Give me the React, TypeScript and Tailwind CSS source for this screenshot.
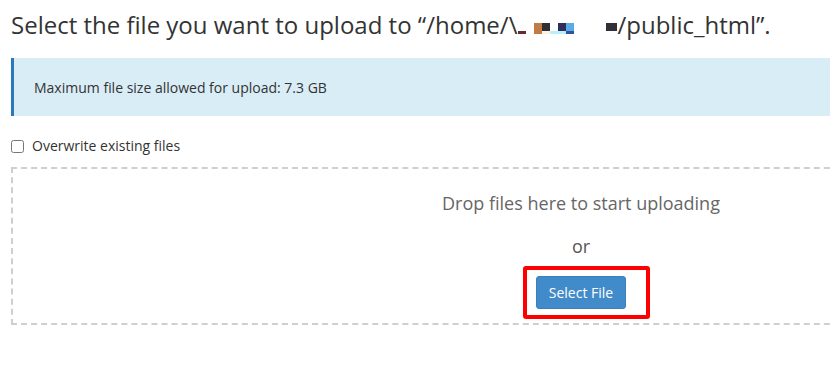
import React from "react";

function Redacted() {
  // pixelated remains of the hidden user name
  return (
    <svg width="100" height="11" viewBox="0 0 100 11" className="inline-block align-baseline">
      <rect x="1" y="8" width="8" height="3" fill="#6b2b2b" />
      <rect x="17" y="0" width="8" height="11" fill="#c27b44" />
      <rect x="25" y="0" width="8" height="8" fill="#2e2e33" />
      <rect x="25" y="8" width="8" height="3" fill="#fff3e0" />
      <rect x="33" y="8" width="16" height="3" fill="#b8f0f8" />
      <rect x="41" y="0" width="8" height="8" fill="#2e2e5e" />
      <rect x="49" y="0" width="8" height="8" fill="#5aaae6" />
      <rect x="49" y="8" width="8" height="3" fill="#2e54a0" />
      <rect x="89" y="0" width="11" height="8" fill="#30303a" />
    </svg>
  );
}

export default function App() {
  return (
    <div className="w-full min-h-screen overflow-hidden bg-white font-['Open_Sans',sans-serif] text-[#333]">
      <div className="w-[1162px] px-[11px] pt-[12px]">
        {/* Title */}
        <h1 className="text-[24px] leading-[26px] font-normal whitespace-nowrap">
          Select the file you want to upload to “/home/\
          <Redacted />
          /public_html”.
        </h1>

        {/* Info alert */}
        <div className="mt-[20px] h-[58px] flex items-center bg-[#d9edf7] border-l-[3px] border-[#2a7ab9] pl-[20px]">
          <p className="text-[14px] text-[#333]">Maximum file size allowed for upload: 7.3 GB</p>
        </div>

        {/* Overwrite option */}
        <label className="mt-[20px] flex items-center gap-[8px] h-[20px] text-[14px] leading-[20px]">
          <input type="checkbox" className="w-[13px] h-[13px]" />
          Overwrite existing files
        </label>

        {/* Drop zone */}
        <div className="mt-[11px] border-2 border-dashed border-[#cfcfcf] pt-[21px] pb-[14px] flex flex-col items-center">
          <p className="text-[18px] leading-[26px] text-[#666]">Drop files here to start uploading</p>
          <p className="mt-[17px] text-[18px] leading-[26px] text-[#555]">or</p>
          <div className="relative mt-[17px]">
            <button className="w-[90px] h-[33px] rounded-[3px] bg-[#428bca] border border-[#3a80bf] text-white text-[14px]">
              Select File
            </button>
            <div className="absolute -left-[13px] -top-[10px] w-[127px] h-[53px] border-4 border-[#ff0000] rounded-[3px]" />
          </div>
        </div>
      </div>
    </div>
  );
}
